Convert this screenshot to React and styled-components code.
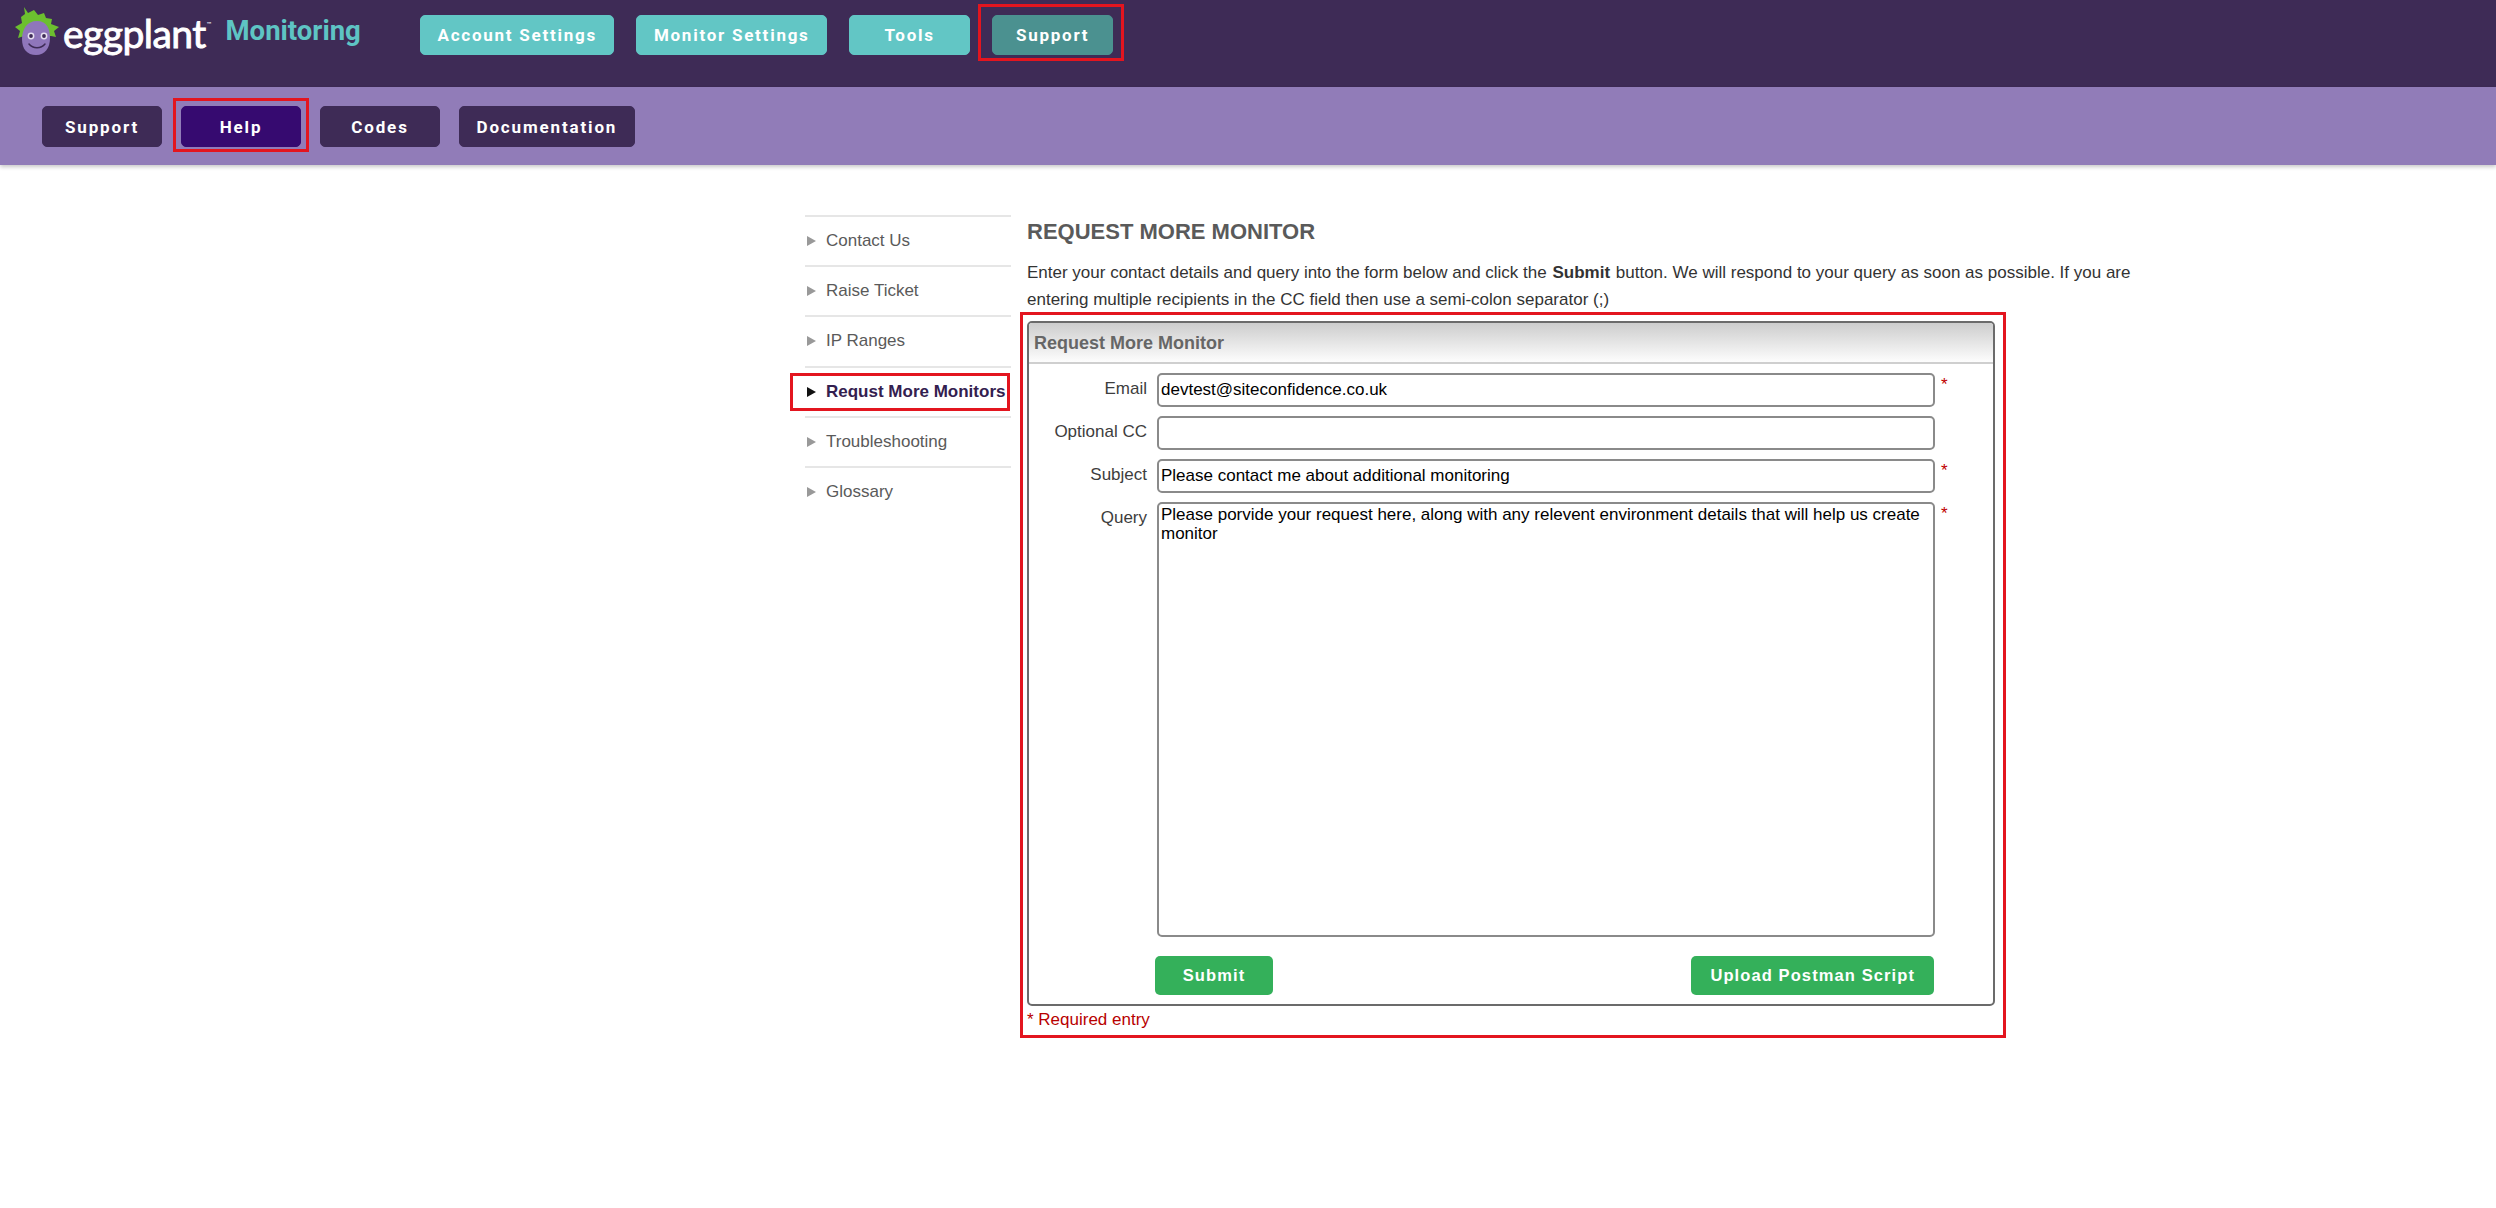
import React from "react";
import styled, { createGlobalStyle } from "styled-components";

const Global = createGlobalStyle`
  html, body { margin: 0; padding: 0; background: #fff; }
  body { font-family: "Liberation Sans", Arial, sans-serif; font-size: 17px; color: #333; }
  * { box-sizing: border-box; }
`;

const Page = styled.div`
  min-height: 1208px;
  display: flex;
  flex-direction: column;
`;
const TopBar = styled.header`
  height: 87px;
  background: #3e2b56;
  display: flex;
  align-items: flex-start;
  padding-left: 15px;
`;
const Logo = styled.div`
  width: 405px;
  height: 87px;
  display: flex;
  align-items: flex-start;
  flex-shrink: 0;
`;
const LogoMark = styled.svg`
  width: 45px;
  height: 50px;
  margin-top: 6px;
  flex-shrink: 0;
`;
const WordMark = styled.span`
  font-family: Lato, sans-serif;
  font-size: 39px;
  line-height: 44px;
  font-weight: 400;
  letter-spacing: -0.55px;
  color: #fff;
  margin: 11px 0 0 3px;
  -webkit-text-stroke: 0.9px #fff;
`;
const Tm = styled.sup`
  font-size: 6px;
  line-height: 6px;
  vertical-align: 22px;
  margin-left: 1px;
  -webkit-text-stroke: 0;
`;
const Product = styled.span`
  font-family: Roboto, sans-serif;
  font-size: 27.5px;
  line-height: 30px;
  font-weight: 700;
  color: #5ec4c4;
  margin: 16px 0 0 15px;
`;
const TopNav = styled.nav`
  display: flex;
  gap: 22px;
  margin-top: 15px;
`;
const TopButton = styled.button`
  position: relative;
  height: 40px;
  min-width: 121px;
  padding: 0 16.5px;
  border: 1px solid ${(p) => (p.$active ? "#4b9190" : "#62c6c5")};
  border-radius: 5px;
  background: ${(p) => (p.$active ? "#4b9190" : "#62c6c5")};
  color: #fff;
  font-family: Roboto, sans-serif;
  font-weight: 700;
  font-size: 17px;
  letter-spacing: 1.75px;
  &::after {
    content: "";
    display: ${(p) => (p.$active ? "block" : "none")};
    position: absolute;
    inset: -12px -12px -7px -15px;
    border: 3px solid #e3151f;
  }
`;
const SubBar = styled.div`
  height: 78px;
  background: #917cb8;
  box-shadow: 0 2px 4px rgba(0, 0, 0, 0.22);
  display: flex;
  align-items: flex-start;
  gap: 19px;
  padding: 19px 0 0 42px;
`;
const SubButton = styled.button`
  position: relative;
  height: 41px;
  min-width: 120px;
  padding: 0 16.5px;
  border: 1px solid ${(p) => (p.$active ? "#360a70" : "#3e2b56")};
  border-radius: 5px;
  background: ${(p) => (p.$active ? "#360a70" : "#3e2b56")};
  color: #fff;
  font-family: Roboto, sans-serif;
  font-weight: 700;
  font-size: 17px;
  letter-spacing: 1.85px;
  &::after {
    content: "";
    display: ${(p) => (p.$active ? "block" : "none")};
    position: absolute;
    inset: -9px -9px -6px -9px;
    border: 3px solid #e3151f;
  }
`;
const Main = styled.main`
  display: flex;
  align-items: flex-start;
  padding: 50px 0 0 790px;
`;
const Side = styled.ul`
  list-style: none;
  margin: 0;
  padding: 0;
  width: 221px;
  flex-shrink: 0;
`;
const SideItem = styled.li`
  height: 50.2px;
  margin-left: 15px;
  border-top: 2px solid #e6e6e6;
  display: flex;
  align-items: center;
  gap: 10px;
  font-size: 17px;
  color: ${(p) => (p.$active ? "#33204f" : "#5a5a5a")};
  font-weight: ${(p) => (p.$active ? 700 : 400)};
  position: relative;
  white-space: nowrap;
`;
const ActiveFrame = styled.span`
  position: absolute;
  left: -15px;
  top: 5px;
  width: 220px;
  height: 38px;
  border: 3px solid #e3151f;
  pointer-events: none;
`;
const Arrow = styled.i`
  width: 0;
  height: 0;
  margin-left: 2px;
  border-left: 9px solid ${(p) => (p.$active ? "#111" : "#999")};
  border-top: 5px solid transparent;
  border-bottom: 5px solid transparent;
`;
const Content = styled.section`
  margin-left: 9px;
  width: 1125px;
`;
const Heading = styled.h1`
  margin: 5px 0 0;
  padding-left: 7px;
  font-size: 22px;
  line-height: 24px;
  font-weight: 700;
  color: #5a5a5a;
`;
const Intro = styled.p`
  margin: 15px 0 0;
  padding-left: 7px;
  font-size: 17px;
  line-height: 27px;
  color: #333;
  b { font-weight: 700; margin: 0 1px; }
`;
const FormFrame = styled.div`
  width: 986px;
  height: 726px;
  margin-top: -1px;
  border: 3px solid #e3151f;
  padding: 6px 8px 0 4px;
`;
const Panel = styled.div`
  width: 968px;
  height: 685px;
  border: 2px solid #6b6b6b;
  border-radius: 5px;
  overflow: hidden;
`;
const PanelHead = styled.div`
  height: 41px;
  padding: 2px 0 0 5px;
  display: flex;
  align-items: center;
  background: linear-gradient(#cdcdcd, #fdfdfd);
  border-bottom: 2px solid #cfcfcf;
  font-size: 18px;
  font-weight: 700;
  color: #666;
`;
const FormGrid = styled.div`
  display: grid;
  grid-template-columns: 118px 778px 20px;
  column-gap: 10px;
  row-gap: 9px;
  padding-top: 9px;
  align-items: start;
`;
const Label = styled.label`
  text-align: right;
  font-size: 17px;
  line-height: 32px;
  color: #3d3d3d;
`;
const Input = styled.input`
  display: block;
  width: 778px;
  height: 34px;
  border: 2px solid #8a8a8a;
  border-radius: 5px;
  padding: 0 2px;
  font: 17px "Liberation Sans", Arial, sans-serif;
  color: #000;
  background: #fff;
`;
const Area = styled.textarea`
  display: block;
  width: 778px;
  height: 435px;
  border: 2px solid #8a8a8a;
  border-radius: 5px;
  padding: 1px 2px;
  font: 17px/19px "Liberation Sans", Arial, sans-serif;
  color: #000;
  resize: none;
  overflow: hidden;
`;
const Star = styled.span`
  color: #c00000;
  font-size: 17px;
  line-height: 24px;
  margin-left: -4px;
`;
const Actions = styled.div`
  display: flex;
  justify-content: space-between;
  width: 779px;
  margin: 19px 0 0 126px;
`;
const GreenButton = styled.button`
  height: 39px;
  min-width: 118px;
  padding: 0 19px;
  border: 0;
  border-radius: 5px;
  background: #34b05a;
  color: #fff;
  font: 700 16.5px "Liberation Sans", Arial, sans-serif;
  letter-spacing: 1.1px;
`;
const Required = styled.div`
  padding: 4px 0 0;
  font-size: 17px;
  line-height: 20px;
  color: #b80000;
`;

const topItems = ["Account Settings", "Monitor Settings", "Tools", "Support"];
const subItems = ["Support", "Help", "Codes", "Documentation"];
const sideItems = ["Contact Us", "Raise Ticket", "IP Ranges", "Requst More Monitors", "Troubleshooting", "Glossary"];

export default function App() {
  return (
    <Page>
      <Global />
      <TopBar>
        <Logo>
          <LogoMark viewBox="0 0 45 50">
            <path
              fill="#6cbf2f"
              d="M9 1 L13 7 L19 4 L23 9 L29 7 L31 12 L37 13 L36 18 L44 21 L39 25 L41 31 L36 30 L9 30 L3 32 L5 25 L0 21 L7 17 L6 11 L10 8 Z"
            />
            <path
              fill="#8f76bb"
              d="M22 15 C32 15 35 23 35 32 C35 42 30 49 21 49 C12 49 7 43 7 33 C7 23 12 15 22 15 Z"
            />
            <circle cx="16" cy="30" r="3.4" fill="#e6dff0" />
            <circle cx="29" cy="30" r="3.4" fill="#e6dff0" />
            <circle cx="16" cy="30" r="1.9" fill="#3e2b56" />
            <circle cx="29" cy="30" r="1.9" fill="#3e2b56" />
            <path d="M14 38 C18 43 26 43 30 38" fill="none" stroke="#3e2b56" strokeWidth="1.5" strokeLinecap="round" />
          </LogoMark>
          <WordMark>
            eggplant<Tm>™</Tm>
          </WordMark>
          <Product>Monitoring</Product>
        </Logo>
        <TopNav>
          {topItems.map((t) => (
            <TopButton key={t} $active={t === "Support"}>
              {t}
            </TopButton>
          ))}
        </TopNav>
      </TopBar>
      <SubBar>
        {subItems.map((t) => (
          <SubButton key={t} $active={t === "Help"}>
            {t}
          </SubButton>
        ))}
      </SubBar>
      <Main>
        <Side>
          {sideItems.map((t) => {
            const active = t === "Requst More Monitors";
            return (
              <SideItem key={t} $active={active}>
                <Arrow $active={active} />
                {t}
                {active && <ActiveFrame />}
              </SideItem>
            );
          })}
        </Side>
        <Content>
          <Heading>REQUEST MORE MONITOR</Heading>
          <Intro>
            Enter your contact details and query into the form below and click the <b>Submit</b> button. We will respond
            to your query as soon as possible. If you are entering multiple recipients in the CC field then use a
            semi-colon separator (;)
          </Intro>
          <FormFrame>
            <Panel>
              <PanelHead>Request More Monitor</PanelHead>
              <FormGrid>
                <Label>Email</Label>
                <Input readOnly value="devtest@siteconfidence.co.uk" />
                <Star>*</Star>
                <Label>Optional CC</Label>
                <Input readOnly value="" />
                <span />
                <Label>Subject</Label>
                <Input readOnly value="Please contact me about additional monitoring" />
                <Star>*</Star>
                <Label>Query</Label>
                <Area
                  readOnly
                  value="Please porvide your request here, along with any relevent environment details that will help us create monitor"
                />
                <Star>*</Star>
              </FormGrid>
              <Actions>
                <GreenButton>Submit</GreenButton>
                <GreenButton>Upload Postman Script</GreenButton>
              </Actions>
            </Panel>
            <Required>* Required entry</Required>
          </FormFrame>
        </Content>
      </Main>
    </Page>
  );
}
